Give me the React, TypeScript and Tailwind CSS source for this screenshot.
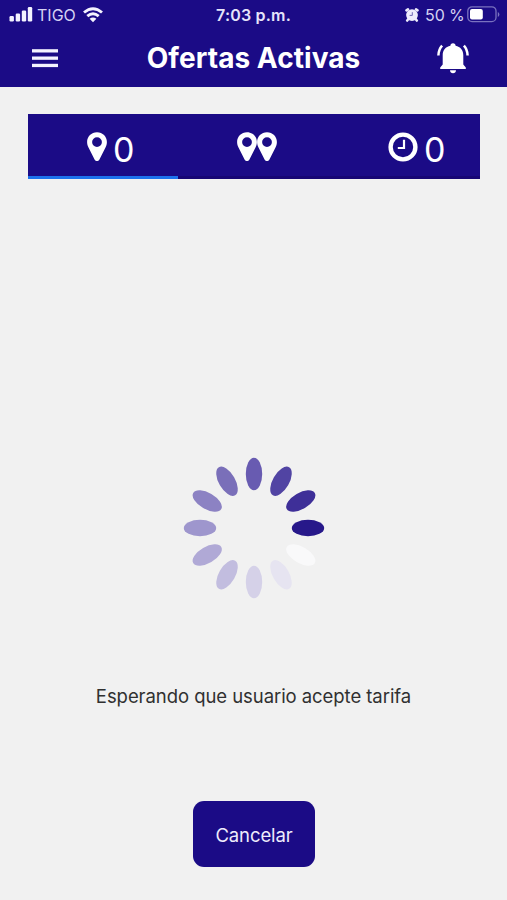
import React from "react";

const petals = [
  "#27188a", "#f9f9fa", "#e6e4f1", "#d5d1e8", "#c2bddf", "#b0a9d6",
  "#9e96cd", "#8c82c3", "#7a6fb9", "#685bb1", "#5144a3", "#3e2f98",
];

function StatusBar() {
  return (
    <div className="grid h-[29px] grid-cols-[1fr_auto_1fr] items-center text-[16px] leading-none text-[#d5d2f2]">
      <div className="flex h-full items-center pl-[9px]">
        <svg className="h-[15px] w-[24px] shrink-0" viewBox="0 0 24 15" fill="#f4f3ff">
          <rect x="0.5" y="9" width="4.4" height="5.5" rx="1.2" />
          <rect x="6.7" y="6.5" width="4.4" height="8" rx="1.2" />
          <rect x="12.8" y="3.5" width="4.4" height="11" rx="1.2" />
          <rect x="18.8" y="0" width="4.4" height="14.5" rx="1.2" />
        </svg>
        <span className="ml-[4px] w-[40px] whitespace-nowrap">TIGO</span>
        <svg className="ml-[5px] h-[16px] w-[22px] shrink-0" viewBox="0 0 22 16" fill="none" stroke="#f4f3ff" strokeWidth="2.9">
          <path d="M2 5.5Q11-2.2 20 5.5" />
          <path d="M5.3 9.1Q11 4.3 16.7 9.1" />
          <path d="M11 15.2L7.6 11.8Q11 9 14.4 11.8Z" fill="#f4f3ff" stroke="none" />
        </svg>
      </div>
      <span className="whitespace-nowrap font-semibold tracking-[0.2px] text-[#e6e4fa]">7:03 p.m.</span>
      <div className="flex h-full items-center justify-end pr-[7px]">
        <svg className="h-[14px] w-[14px] shrink-0" viewBox="0 0 14 14">
          <g stroke="#eeecfc" strokeWidth="2.6" strokeLinecap="round">
            <path d="M1.5 2.4L3 1.4M12.5 2.4L11 1.4M3.4 11L2.2 12.5M10.6 11L11.8 12.5" />
          </g>
          <circle cx="7" cy="7.1" r="5.9" fill="#eeecfc" />
          <path d="M7.3 4.2V7.4H4.6" fill="none" stroke="#6f67b4" strokeWidth="1" />
        </svg>
        <span className="ml-[6px] w-[40px] whitespace-nowrap tracking-[-0.1px]">50 %</span>
        <svg className="ml-[2px] h-[17px] w-[33px] shrink-0" viewBox="0 0 33 17">
          <rect x="0.8" y="0.8" width="28.2" height="14.8" rx="4.2" fill="none" stroke="#7a72bf" strokeWidth="1.3" />
          <rect x="3" y="3" width="12.8" height="10.4" rx="2" fill="#fff" />
          <path d="M30.8 6V11Q32.4 10.2 32.4 8.5Q32.4 6.8 30.8 6Z" fill="#7a72bf" />
        </svg>
      </div>
    </div>
  );
}

function Pin() {
  return (
    <svg className="h-[30px] w-[20px] shrink-0" viewBox="0 0 20 30">
      <path
        fill="#fff"
        fillRule="evenodd"
        d="M10 0.3C4.4 0.3 0.1 4.6 0.1 10C0.1 12.2 0.7 13.8 1.5 15.5L7.7 27.8C8.6 29.4 11.4 29.4 12.3 27.8L18.5 15.5C19.3 13.8 19.9 12.2 19.9 10C19.9 4.6 15.6 0.3 10 0.3ZM10 5.2A4.9 4.9 0 1 1 10 15A4.9 4.9 0 1 1 10 5.2Z"
      />
    </svg>
  );
}

function Clock() {
  return (
    <svg className="h-[30px] w-[30px] shrink-0" viewBox="0 0 30 30" fill="none" stroke="#fff">
      <circle cx="15" cy="15" r="12.4" strokeWidth="4.4" />
      <path d="M16 7.8V16H9.8" strokeWidth="2.2" />
    </svg>
  );
}

function Spinner() {
  return (
    <svg className="h-[142px] w-[142px]" viewBox="-71 -71 142 142">
      {petals.map((color, i) => (
        <ellipse key={color} cx="54" cy="0" rx="16.2" ry="8.2" fill={color} transform={`rotate(${i * 30})`} />
      ))}
    </svg>
  );
}

export default function App() {
  return (
    <div className="flex h-[900px] w-[507px] flex-col overflow-hidden bg-[#f1f1f1] font-['Inter','Liberation_Sans',sans-serif]">
      <header className="h-[87px] shrink-0 bg-[#1b0b86]">
        <StatusBar />
        <div className="grid h-[58px] grid-cols-[1fr_auto_1fr] items-center text-white">
          <button aria-label="Menú" className="ml-[32px] w-[26px]">
            <svg className="block h-[19px] w-[26px]" viewBox="0 0 26 19" fill="#f4f3ff">
              <rect y="0.2" width="26" height="3.3" />
              <rect y="7.5" width="26" height="3.3" />
              <rect y="14.8" width="26" height="3.3" />
            </svg>
          </button>
          <h1 className="whitespace-nowrap text-[28px] font-bold leading-none tracking-[0.05px]">Ofertas Activas</h1>
          <button aria-label="Notificaciones" className="ml-auto mr-[37px]">
            <svg className="h-[32px] w-[34px]" viewBox="0 0 34 32" fill="#fff">
              <path d="M17 1.2C15.4 1.2 14.4 2.2 14.4 3.8C9.6 4.8 6.7 8.2 6.7 13.3V22.4L4.2 25.4V27.1H29.8V25.4L27.3 22.4V13.3C27.3 8.2 24.4 4.8 19.6 3.8C19.6 2.2 18.6 1.2 17 1.2Z" />
              <path d="M14 28.3H20C20 30.1 18.7 31.2 17 31.2S14 30.1 14 28.3Z" />
              <path d="M6.1 3.7Q2.6 7.5 2.4 13.5M27.9 3.7Q31.4 7.5 31.6 13.5" fill="none" stroke="#fff" strokeWidth="2.5" />
            </svg>
          </button>
        </div>
      </header>

      <main className="flex flex-1 flex-col items-center">
        <nav className="mt-[27px] grid h-[65px] w-[452px] grid-cols-3 bg-[#1b0b86] text-[34px] font-[370] leading-[34px] text-white">
          <div className="flex items-start justify-center border-b-[3px] border-[#1d72ed] pl-[16px] pt-[18px]">
            <Pin />
            <span className="ml-[6px] mt-[1px]">0</span>
          </div>
          <div className="flex items-start justify-center border-b-[3px] border-[#170674] pl-[8px] pt-[18px]">
            <Pin />
            <Pin />
          </div>
          <div className="flex items-start justify-center border-b-[3px] border-[#170674] pl-[25px] pt-[18px]">
            <Clock />
            <span className="ml-[6px] mt-[1px]">0</span>
          </div>
        </nav>
        <div className="mt-[278px] flex h-[142px] w-full justify-center pl-[1px]">
          <Spinner />
        </div>
        <p className="mt-[85px] whitespace-nowrap text-[18.5px] leading-[24px] tracking-[-0.06px] text-[#303030]">
          Esperando que usuario acepte tarifa
        </p>
        <button className="ml-[1px] mt-[93px] h-[66px] w-[122px] rounded-[11px] bg-[#1b0b86] pt-[2px] text-[18.5px] leading-none tracking-[-0.1px] text-[#eeecfc]">
          Cancelar
        </button>
      </main>
    </div>
  );
}
